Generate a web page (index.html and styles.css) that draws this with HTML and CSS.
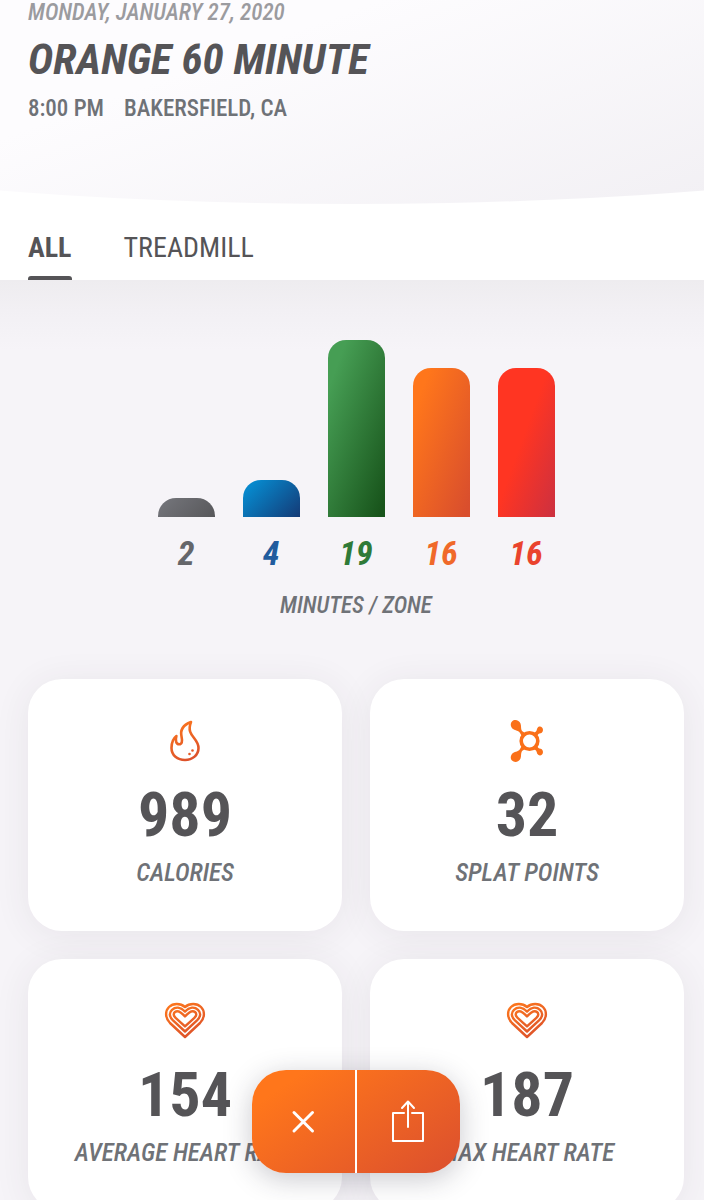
FILE: index.html
```
<!DOCTYPE html>
<html lang="en">
<head>
    <meta charset="UTF-8">
    <meta name="viewport" content="width=device-width, initial-scale=1.0">
    <title>Orange 60 Minute</title>
    <link rel="stylesheet" href="styles.css">
</head>
<body>
    <!-- shared icon gradient and symbols -->
    <svg class="defs" width="0" height="0" aria-hidden="true">
        <defs>
            <linearGradient id="orange" gradientUnits="userSpaceOnUse" x1="8" y1="0" x2="30" y2="44">
                <stop offset="0" stop-color="#ff7a1c"/>
                <stop offset="1" stop-color="#d94d2c"/>
            </linearGradient>
            <symbol id="heart" viewBox="0 0 44 44">
                <g fill="none" stroke="url(#orange)" stroke-width="2.400" stroke-linejoin="round">
                    <path d="M22 38 L7 24 C2 19 2 12 6 8 C10 4 17.500 4 22 8 C26.500 4 34 4 38 8 C42 12 42 19 37 24 Z"/>
                    <path d="M22 32.500 L10 21.400 C6 17.500 6 13.500 9 10.800 C12.500 7.600 17.500 8 22 12.600 C26.500 8 31.500 7.600 35 10.800 C38 13.500 38 17.500 34 21.400 Z"/>
                    <path d="M22 27.400 L12.600 18.800 C10.200 16.600 10.200 14.600 12 13 C14.400 11.200 17.500 12.400 22 17.400 C26.500 12.400 29.600 11.200 32 13 C33.800 14.600 33.800 16.600 31.400 18.800 Z"/>
                </g>
            </symbol>
        </defs>
    </svg>

    <div class="screen">
        <header class="header">
            <p class="date">MONDAY, JANUARY 27, 2020</p>
            <h1>ORANGE 60 MINUTE</h1>
            <p class="place"><span>8:00 PM</span><span>BAKERSFIELD, CA</span></p>
        </header>

        <nav class="tabs">
            <button class="tab active" type="button">ALL</button>
            <button class="tab" type="button">TREADMILL</button>
        </nav>

        <main class="content">
            <section class="chart">
                <div class="bars">
                    <div class="zone gray"><div class="bar" style="height: 19px"></div><span class="minutes">2</span></div>
                    <div class="zone blue"><div class="bar" style="height: 37px"></div><span class="minutes">4</span></div>
                    <div class="zone green"><div class="bar" style="height: 177px"></div><span class="minutes">19</span></div>
                    <div class="zone orange"><div class="bar" style="height: 149px"></div><span class="minutes">16</span></div>
                    <div class="zone red"><div class="bar" style="height: 149px"></div><span class="minutes">16</span></div>
                </div>
                <h2>MINUTES / ZONE</h2>
            </section>

            <section class="cards">
                <div class="card">
                    <svg class="icon" viewBox="0 0 44 44" fill="none" stroke="url(#orange)" stroke-width="2.6" stroke-linejoin="round" stroke-linecap="round">
                        <path d="M28 3 C20 6 17 11.500 18.600 18 C19.600 22.500 18.800 25.200 16.200 25.200 C13 25.200 12.200 21.500 13.400 17 C9.500 20 8.500 24 8.500 29 C8.500 36.500 14.500 41 22 41 C29.500 41 35.500 36 35.500 29 C35.500 18.500 22.500 17 28 3 Z"/>
                        <g fill="#e65a26" stroke="none">
                            <circle cx="26.500" cy="35" r="1.300"/>
                            <circle cx="29.500" cy="31.500" r="1.300"/>
                        </g>
                    </svg>
                    <strong class="value">989</strong>
                    <span class="label">CALORIES</span>
                </div>
                <div class="card">
                    <svg class="icon" viewBox="0 0 44 44" fill="#fa7019">
                        <path d="M7 2.500 C9.500 0 14 1 15.500 4.500 C16.500 7 15.500 9.500 17 12 L20 14 L17 17.500 L15 14 C13.500 11 10.500 12 8 10 C5.500 8 5 4.500 7 2.500 Z"/>
                        <path d="M7 41.500 C9.500 44 14 43 15.500 39.500 C16.500 37 15.500 34.500 17 32 L20 30 L17 26.500 L15 30 C13.500 33 10.500 32 8 34 C5.500 36 5 39.500 7 41.500 Z"/>
                        <path d="M29 13.500 C32 13 31.500 10.500 32.500 9 C34 6.500 38 7.500 38 11 C38 13.500 36 14.500 34.500 14.500 C33.500 14.500 33 15.500 32 17 Z"/>
                        <path d="M29 30.500 C32 31 31.500 33.500 32.500 35 C34 37.500 38 36.500 38 33 C38 30.500 36 29.500 34.500 29.500 C33.500 29.500 33 28.500 32 27 Z"/>
                        <circle cx="24.500" cy="22" r="8.300" fill="none" stroke="#fa7019" stroke-width="3.600"/>
                    </svg>
                    <strong class="value">32</strong>
                    <span class="label">SPLAT POINTS</span>
                </div>
                <div class="card">
                    <svg class="icon"><use href="#heart"/></svg>
                    <strong class="value">154</strong>
                    <span class="label">AVERAGE HEART RATE</span>
                </div>
                <div class="card">
                    <svg class="icon"><use href="#heart"/></svg>
                    <strong class="value">187</strong>
                    <span class="label">MAX HEART RATE</span>
                </div>
            </section>
        </main>
    </div>

    <div class="actions">
        <button type="button" aria-label="Close">
            <svg width="44" height="44" viewBox="0 0 44 44" fill="none" stroke="#fff" stroke-width="3" stroke-linecap="round">
                <path d="M12 12.500 L30.500 31 M30.500 12.500 L12 31"/>
            </svg>
        </button>
        <button type="button" aria-label="Share">
            <svg width="44" height="44" viewBox="0 0 44 44" fill="none" stroke="#fff" stroke-width="2" stroke-linecap="round" stroke-linejoin="round">
                <path d="M17 13 H6 V41 H36 V13 H25"/>
                <path d="M21 27 V2 M15 8 L21 1.500 L27 8"/>
            </svg>
        </button>
    </div>
</body>
</html>
```
FILE: styles.css
```
* {
    box-sizing: border-box;
}
body {
    margin: 0;
    height: 100vh;
    overflow: hidden;
    font-family: "Roboto Condensed", "Liberation Sans Narrow", Roboto, sans-serif;
    color: #555457;
    background-color: #fff;
}
.defs {
    position: absolute;
}
.screen {
    height: 100%;
    overflow-y: auto;
    scrollbar-width: none;
}
h1, h2, p {
    margin: 0;
}
.header {
    height: 204px;
    padding: 0 28px;
    background: linear-gradient(160deg, #fdfcfe 30%, #f2f0f4);
    clip-path: ellipse(140% 100% at 50% 0);
}
.date {
    font-size: 23px;
    line-height: 26px;
    font-style: italic;
    font-weight: 500;
    color: #9b9b9f;
}
h1 {
    font-size: 43px;
    line-height: 66px;
    font-style: italic;
    font-weight: bold;
}
.place {
    display: flex;
    gap: 20px;
    font-size: 23px;
    line-height: 34px;
    font-weight: 500;
    color: #6f7277;
}
.tabs {
    display: flex;
    gap: 52px;
    height: 76px;
    padding: 0 28px;
}
.tab {
    padding: 26px 0 0;
    border: none;
    background: none;
    font-family: inherit;
    font-size: 28px;
    line-height: 36px;
    color: #555457;
    cursor: pointer;
}
.tab::after {
    content: "";
    display: block;
    height: 4px;
    margin-top: 10px;
    border-radius: 3px 3px 0 0;
}
.tab.active {
    font-weight: bold;
}
.tab.active::after {
    background-color: #555457;
}
.content {
    padding: 60px 20px 28px 28px;
    background: linear-gradient(#eeecef, #f2f0f4 30px, #f6f4f8 70px);
}
.chart {
    text-align: center;
}
.bars {
    display: flex;
    justify-content: center;
    align-items: flex-end;
    gap: 28px;
}
.zone {
    width: 57px;
}
.bar {
    border-radius: 18px 18px 0 0;
}
.minutes {
    display: block;
    margin-top: 14px;
    font-size: 34px;
    line-height: 44px;
    font-style: italic;
    font-weight: bold;
}
.gray .bar { background: linear-gradient(135deg, #76777d, #57575a); }
.blue .bar { background: linear-gradient(135deg, #0788cc 15%, #143a76); }
.green .bar { background: linear-gradient(110deg, #469e54 15%, #18541b 95%); }
.orange .bar { background: linear-gradient(110deg, #ff761b 15%, #d94e2d 95%); }
.red .bar { background: linear-gradient(110deg, #ff3522 45%, #cc3040); }
.gray .minutes { color: #65666a; }
.blue .minutes { color: #215c9e; }
.green .minutes { color: #2f7a38; }
.orange .minutes { color: #f0692a; }
.red .minutes { color: #ea432d; }
h2 {
    margin-top: 14px;
    font-size: 23px;
    line-height: 34px;
    font-style: italic;
    font-weight: 500;
    color: #6f7277;
}
.cards {
    display: grid;
    grid-template-columns: 1fr 1fr;
    gap: 28px;
    margin-top: 56px;
}
.card {
    display: flex;
    flex-direction: column;
    align-items: center;
    height: 252px;
    padding-top: 40px;
    border-radius: 34px;
    background-color: #fff;
    box-shadow: 0 4px 36px rgba(60, 55, 60, 0.08);
}
.icon {
    width: 44px;
    height: 44px;
}
.value {
    margin-top: 16px;
    font-size: 62px;
    line-height: 72px;
}
.label {
    margin-top: 4px;
    font-size: 25px;
    line-height: 36px;
    font-style: italic;
    font-weight: 500;
    color: #6f7277;
    white-space: nowrap;
}
.actions {
    position: fixed;
    left: 50%;
    bottom: 27px;
    display: flex;
    width: 208px;
    height: 103px;
    margin-left: -100px;
    border-radius: 34px;
    background: linear-gradient(145deg, #ff761b 15%, #db4f2e);
    box-shadow: 0 6px 28px rgba(40, 40, 60, 0.25);
}
.actions button {
    flex: 1;
    display: flex;
    align-items: center;
    justify-content: center;
    padding: 0;
    border: none;
    background: none;
    cursor: pointer;
}
.actions button + button {
    border-left: 2px solid #fff;
}
```
